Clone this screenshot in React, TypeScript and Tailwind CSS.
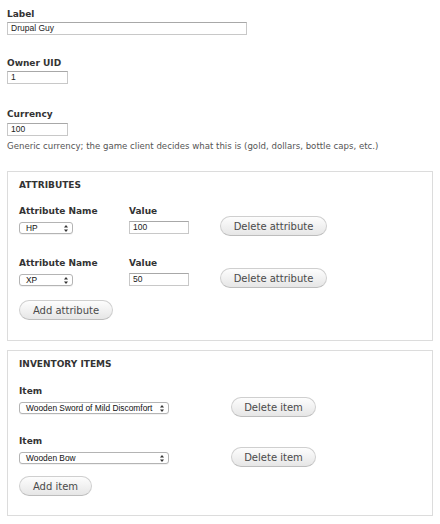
import React from 'react'

const sans = 'font-["DejaVu_Sans",sans-serif]'
const ctl = 'font-["Liberation_Sans",Arial,sans-serif]'

function FieldLabel({ children }: { children: React.ReactNode }) {
  return <div className={`${sans} text-[9px] font-bold leading-[12px] text-[#333]`}>{children}</div>
}

function TextInput({ value, width }: { value: string; width: string }) {
  return (
    <div
      className={`${ctl} ${width} h-[13px] border border-[#c8c8c8] border-t-[#a8a8a8] bg-white pl-[3px] text-[8.5px] leading-[11px] text-[#222]`}
    >
      {value}
    </div>
  )
}

function SelectBox({ value, width }: { value: string; width: string }) {
  return (
    <div
      className={`${ctl} ${width} flex h-[12px] items-center justify-between rounded-[3px] border border-[#b4b4b4] bg-white pl-[6px] pr-[4px] text-[8.4px] text-[#111] shadow-[0_1px_0_rgba(0,0,0,0.05)]`}
    >
      <span className="leading-[10px]">{value}</span>
      <svg width="4" height="7" viewBox="0 0 4 7" aria-hidden="true">
        <path d="M2 0 L4 2.6 L0 2.6 Z" fill="#333" />
        <path d="M0 4.4 L4 4.4 L2 7 Z" fill="#333" />
      </svg>
    </div>
  )
}

function Btn({ children, width }: { children: React.ReactNode; width: string }) {
  return (
    <div
      className={`${sans} ${width} flex h-[20px] items-center justify-center rounded-full border border-[#cfcfcf] border-b-[#bdbdbd] bg-gradient-to-b from-[#fdfdfd] to-[#e6e6e6] text-[10px] text-[#4a4a4a]`}
    >
      {children}
    </div>
  )
}

function Fieldset({ title, children }: { title: string; children: React.ReactNode }) {
  return (
    <div className="w-[426px] border border-[#dcdcdc] bg-white pl-[11px]">
      <div className={`${sans} mt-[7px] text-[9px] font-bold uppercase leading-[12px] text-[#333]`}>{title}</div>
      {children}
    </div>
  )
}

export default function App() {
  const attributes = [
    { name: 'HP', value: '100' },
    { name: 'XP', value: '50' },
  ]
  const items = ['Wooden Sword of Mild Discomfort', 'Wooden Bow']

  return (
    <div className="h-[524px] w-[440px] bg-white pl-[7px] pt-[8px]">
      <FieldLabel>Label</FieldLabel>
      <div className="mt-[2px]">
        <TextInput value="Drupal Guy" width="w-[240px]" />
      </div>

      <div className="mt-[22px]">
        <FieldLabel>Owner UID</FieldLabel>
      </div>
      <div className="mt-[2px]">
        <TextInput value="1" width="w-[61px]" />
      </div>

      <div className="mt-[24px]">
        <FieldLabel>Currency</FieldLabel>
      </div>
      <div className="mt-[3px]">
        <TextInput value="100" width="w-[61px]" />
      </div>
      <div className={`${sans} mt-[5px] text-[8.6px] leading-[11px] text-[#555]`}>
        Generic currency; the game client decides what this is (gold, dollars, bottle caps, etc.)
      </div>

      <div className="mt-[19px]">
        <Fieldset title="Attributes">
          {attributes.map((a, i) => (
            <div key={a.name} className={`flex items-end ${i === 0 ? 'mt-[14px]' : 'mt-[23px]'}`}>
              <div className="w-[110px]">
                <FieldLabel>Attribute Name</FieldLabel>
                <div className="mt-[5px]">
                  <SelectBox value={a.name} width="w-[54px]" />
                </div>
              </div>
              <div className="w-[91px]">
                <FieldLabel>Value</FieldLabel>
                <div className="mt-[4px]">
                  <TextInput value={a.value} width="w-[60px]" />
                </div>
              </div>
              <div className="mb-[-2px]">
                <Btn width="w-[107px]">Delete attribute</Btn>
              </div>
            </div>
          ))}
          <div className="mt-[14px] mb-[20px]">
            <Btn width="w-[94px]">Add attribute</Btn>
          </div>
        </Fieldset>
      </div>

      <div className="mt-[9px]">
        <Fieldset title="Inventory Items">
          {items.map((it, i) => (
            <div key={it} className={`flex items-end ${i === 0 ? 'mt-[15px]' : 'mt-[21px]'}`}>
              <div className="w-[212px]">
                <FieldLabel>Item</FieldLabel>
                <div className="mt-[5px]">
                  <SelectBox value={it} width="w-[150px]" />
                </div>
              </div>
              <div className="mb-[-3px]">
                <Btn width="w-[85px]">Delete item</Btn>
              </div>
            </div>
          ))}
          <div className="mt-[12px] mb-[19px]">
            <Btn width="w-[73px]">Add item</Btn>
          </div>
        </Fieldset>
      </div>
    </div>
  )
}
